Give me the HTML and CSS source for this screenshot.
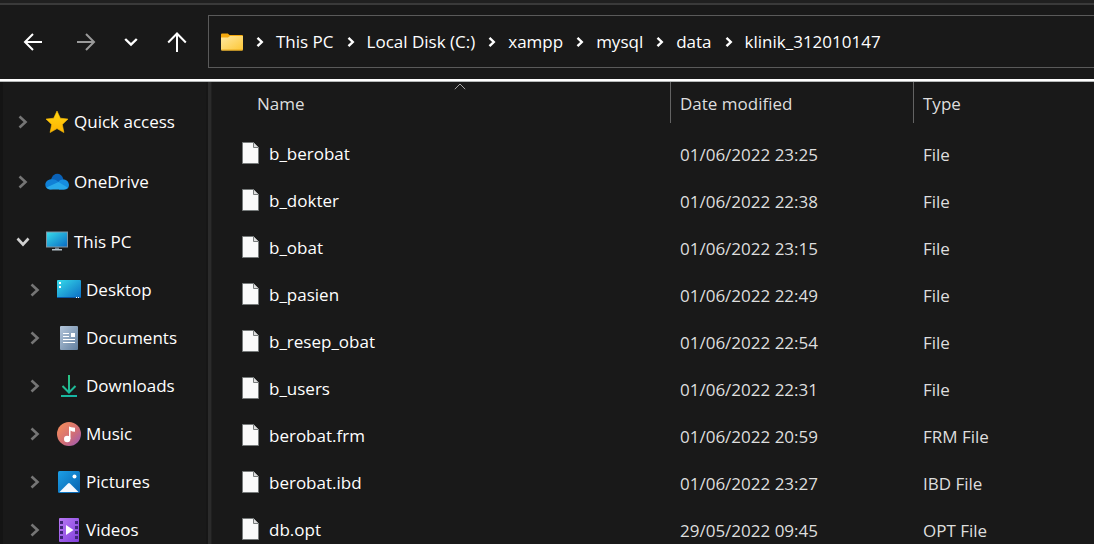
FILE: index.html
```html
<!DOCTYPE html>
<html lang="en">
<head>
<meta charset="utf-8">
<meta name="viewport" content="width=device-width, initial-scale=1">
<title>klinik_312010147</title>
<link rel="stylesheet" href="styles.css">
</head>
<body>
<svg class="defs" width="0" height="0" aria-hidden="true">
  <defs>
    <linearGradient id="gFolder" x1="0" y1="0" x2="1" y2="1"><stop offset="0" stop-color="#ffe8a0"/><stop offset="1" stop-color="#fdc634"/></linearGradient>
    <linearGradient id="gStar" x1="0" y1="0" x2="0" y2="1"><stop offset="0" stop-color="#ffd614"/><stop offset="1" stop-color="#ffb300"/></linearGradient>
    <linearGradient id="gScreen" x1="0" y1="0" x2="1" y2="1"><stop offset="0" stop-color="#36dbea"/><stop offset="1" stop-color="#0b6cc4"/></linearGradient>
    <linearGradient id="gDoc" x1="0" y1="0" x2="1" y2="1"><stop offset="0" stop-color="#b4c6db"/><stop offset="1" stop-color="#63809f"/></linearGradient>
    <linearGradient id="gDown" gradientUnits="userSpaceOnUse" x1="6" y1="1" x2="16" y2="22"><stop offset="0" stop-color="#2fc67d"/><stop offset="1" stop-color="#16b4a4"/></linearGradient>
    <linearGradient id="gMusic" x1="0" y1="0" x2="1" y2="1"><stop offset="0.1" stop-color="#f38b5c"/><stop offset="0.6" stop-color="#cf6d78"/><stop offset="1" stop-color="#9657c0"/></linearGradient>
    <linearGradient id="gPic" x1="0" y1="0" x2="1" y2="1"><stop offset="0" stop-color="#1c9fe6"/><stop offset="1" stop-color="#0560ae"/></linearGradient>
    <linearGradient id="gVideo" x1="0" y1="0" x2="1" y2="1"><stop offset="0" stop-color="#b878f4"/><stop offset="1" stop-color="#8140dc"/></linearGradient>
    <symbol id="crumb" viewBox="0 0 8 12"><path d="M1.5 1.8 5.8 6 1.5 10.2" fill="none" stroke="currentColor" stroke-width="2.4"/></symbol>
    <symbol id="chev" viewBox="0 0 10 14"><path d="M1.5 1.5 7.5 7 1.5 12.5" fill="none" stroke="currentColor" stroke-width="2.6"/></symbol>
    <symbol id="file" viewBox="0 0 17 22"><path d="M.5.5h11l5 5v16H.5z" fill="#fafafa" stroke="#777b7b"/><path d="M11.5.5v5h5" fill="#dedede" stroke="#777b7b"/></symbol>
  </defs>
</svg>

<header class="toolbar">
  <div class="nav-buttons">
    <button class="nav-button" type="button" aria-label="Back"><svg width="20" height="18" viewBox="0 0 20 18"><path d="M10 1 2 9l8 8M2 9h17" fill="none" stroke="currentColor" stroke-width="2"/></svg></button>
    <button class="nav-button muted" type="button" aria-label="Forward"><svg width="20" height="18" viewBox="0 0 20 18"><path d="M10 1l8 8-8 8M18 9H1" fill="none" stroke="currentColor" stroke-width="2"/></svg></button>
    <button class="nav-button narrow" type="button" aria-label="Recent locations"><svg width="14" height="10" viewBox="0 0 14 10"><path d="M1.2 2 7 7.5 12.8 2" fill="none" stroke="currentColor" stroke-width="2.4"/></svg></button>
    <button class="nav-button up" type="button" aria-label="Up"><svg width="20" height="20" viewBox="0 0 20 20"><path d="M1.2 10.5 10 1.5l8.800 9M10 1.500V20" fill="none" stroke="currentColor" stroke-width="2"/></svg></button>
  </div>
  <nav class="address" aria-label="Address">
    <svg class="folder" width="22" height="18" viewBox="0 0 22 18"><path d="M0 1.500Q0 .5 1 .5h5.800L8.500 2H21q1 0 1 1v13H0z" fill="#f5a90f"/><path d="M0 4.500h7L9 3h13v13q0 1.500-1 1.500H1q-1 0-1-1.500z" fill="url(#gFolder)"/><path d="M.5 17h21" stroke="#e8a91e"/></svg>
    <ol class="crumbs">
      <li><svg class="sep" aria-hidden="true"><use href="#crumb"/></svg><a href="#">This PC</a></li>
      <li><svg class="sep" aria-hidden="true"><use href="#crumb"/></svg><a href="#">Local Disk (C:)</a></li>
      <li><svg class="sep" aria-hidden="true"><use href="#crumb"/></svg><a href="#">xampp</a></li>
      <li><svg class="sep" aria-hidden="true"><use href="#crumb"/></svg><a href="#">mysql</a></li>
      <li><svg class="sep" aria-hidden="true"><use href="#crumb"/></svg><a href="#">data</a></li>
      <li><svg class="sep" aria-hidden="true"><use href="#crumb"/></svg><a href="#">klinik_312010147</a></li>
    </ol>
  </nav>
</header>

<div class="explorer">
  <nav class="sidebar" aria-label="Folders">
    <div class="tree-row root"><button class="toggle" type="button" aria-label="Expand Quick access"><svg width="10" height="14"><use href="#chev"/></svg></button>
      <a href="#"><svg class="icon" viewBox="0 0 24 24"><path d="M12 1l3.300 7.200 7.700.9-5.700 5.300 1.600 8.100L12 18.600l-6.900 3.900 1.600-8.100L1 9.100l7.700-.9z" fill="url(#gStar)" stroke="#ffc107" stroke-width=".6" stroke-linejoin="round"/></svg>Quick access</a></div>
    <div class="tree-row root"><button class="toggle" type="button" aria-label="Expand OneDrive"><svg width="10" height="14"><use href="#chev"/></svg></button>
      <a href="#"><svg class="icon" viewBox="0 0 24 24"><path d="M6 9.500C8 2.500 16 1.500 18.500 9.500L14 15z" fill="#0a62b8"/><path d="M5 19.500C-1.500 19-1.300 10 6 9.300c3-.5 5 .6 9 3.200L8 19z" fill="#1080d6"/><path d="M13.500 12c2.500-4 10-3 10.500 3 0 3-2 4.500-4.500 4.500H14z" fill="#168ddf"/><path d="M1.500 17.500 13.500 12l9 5.500q-1 2-4 2h-13q-2.500 0-4-2z" fill="#28a8ea"/></svg>OneDrive</a></div>
    <div class="tree-row open"><button class="toggle" type="button" aria-label="Collapse This PC" aria-expanded="true"><svg width="14" height="10" viewBox="0 0 14 10"><path d="M1.500 1.500 7 7.500l5.500-6" fill="none" stroke="currentColor" stroke-width="2.600"/></svg></button>
      <a href="#"><svg class="icon" viewBox="0 0 24 24"><path d="M1 1.500h22v16H1z" fill="#8295a3"/><path d="M2 2.500h20v14H2z" fill="url(#gScreen)"/><path d="M10 17.500h4v2h-4z" fill="#71818c"/><path d="M7 19h10v1.500H7z" fill="#b5c1c9"/></svg>This PC</a></div>
    <div class="tree-row child"><button class="toggle" type="button" aria-label="Expand Desktop"><svg width="10" height="14"><use href="#chev"/></svg></button>
      <a href="#"><svg class="icon" viewBox="0 0 24 24"><rect y="2" width="24" height="18" rx="1" fill="url(#gScreen)"/><path d="M0 19h24v.5q0 .5-1 .5H1q-1 0-1-.5z" fill="#0755a4"/><path d="M2 4h2v2H2zM2 8h2v2H2zM19 19h1v1h-1zM21 19h1v1h-1z" fill="#fff"/></svg>Desktop</a></div>
    <div class="tree-row child"><button class="toggle" type="button" aria-label="Expand Documents"><svg width="10" height="14"><use href="#chev"/></svg></button>
      <a href="#"><svg class="icon" viewBox="0 0 24 24"><rect x="3" width="18" height="24" rx="1" fill="url(#gDoc)"/><path d="M6 7.500h6M6 10.500h6M6 13.500h12M6 16.500h12" stroke="#fff"/><path d="M14 7h4v4h-4z" fill="#fff"/></svg>Documents</a></div>
    <div class="tree-row child"><button class="toggle" type="button" aria-label="Expand Downloads"><svg width="10" height="14"><use href="#chev"/></svg></button>
      <a href="#"><svg class="icon" viewBox="0 0 24 24"><path d="M12 1v17.500M5.500 12l6.500 6.500 6.500-6.500M4 22h16" fill="none" stroke="url(#gDown)" stroke-width="2"/></svg>Downloads</a></div>
    <div class="tree-row child"><button class="toggle" type="button" aria-label="Expand Music"><svg width="10" height="14"><use href="#chev"/></svg></button>
      <a href="#"><svg class="icon" viewBox="0 0 24 24"><circle cx="12" cy="12" r="12" fill="url(#gMusic)"/><path d="M12 4.500q1.500 1 6 1.200v4q-3 0-4.500-1.200V17H12z" fill="#fff"/><circle cx="10.200" cy="17" r="3.200" fill="#fff"/></svg>Music</a></div>
    <div class="tree-row child"><button class="toggle" type="button" aria-label="Expand Pictures"><svg width="10" height="14"><use href="#chev"/></svg></button>
      <a href="#"><svg class="icon" viewBox="0 0 24 24"><rect x="1" y="1" width="22" height="22" rx="1.500" fill="url(#gPic)"/><circle cx="17.500" cy="6.500" r="2" fill="#fff"/><path d="M2.500 22 11 13.500q1-1 2 0L21.500 22z" fill="#f2f8ff"/></svg>Pictures</a></div>
    <div class="tree-row child"><button class="toggle" type="button" aria-label="Expand Videos"><svg width="10" height="14"><use href="#chev"/></svg></button>
      <a href="#"><svg class="icon" viewBox="0 0 24 24"><rect x="2" width="20" height="24" rx="1" fill="url(#gVideo)"/><path d="M3 3h3v3H3zM3 8h3v3H3zM3 13h3v3H3zM3 18h3v3H3zM18 3h3v3h-3zM18 8h3v3h-3zM18 13h3v3h-3zM18 18h3v3h-3z" fill="#40257a"/><path d="M9 7v10l7.500-5z" fill="#fff"/></svg>Videos</a></div>
  </nav>

  <main class="files">
    <svg class="sort" width="12" height="7" viewBox="0 0 12 7" aria-hidden="true"><path d="M.8 6.200 6 1l5.200 5.200" fill="none" stroke="currentColor"/></svg>
    <table class="file-table">
      <colgroup><col class="col-name"><col class="col-date"><col></colgroup>
      <thead>
        <tr><th scope="col" aria-sort="ascending">Name</th><th scope="col">Date modified</th><th scope="col">Type</th></tr>
      </thead>
      <tbody>
        <tr><td><svg class="file-icon"><use href="#file"/></svg>b_berobat</td><td>01/06/2022 23:25</td><td>File</td></tr>
        <tr><td><svg class="file-icon"><use href="#file"/></svg>b_dokter</td><td>01/06/2022 22:38</td><td>File</td></tr>
        <tr><td><svg class="file-icon"><use href="#file"/></svg>b_obat</td><td>01/06/2022 23:15</td><td>File</td></tr>
        <tr><td><svg class="file-icon"><use href="#file"/></svg>b_pasien</td><td>01/06/2022 22:49</td><td>File</td></tr>
        <tr><td><svg class="file-icon"><use href="#file"/></svg>b_resep_obat</td><td>01/06/2022 22:54</td><td>File</td></tr>
        <tr><td><svg class="file-icon"><use href="#file"/></svg>b_users</td><td>01/06/2022 22:31</td><td>File</td></tr>
        <tr><td><svg class="file-icon"><use href="#file"/></svg>berobat.frm</td><td>01/06/2022 20:59</td><td>FRM File</td></tr>
        <tr><td><svg class="file-icon"><use href="#file"/></svg>berobat.ibd</td><td>01/06/2022 23:27</td><td>IBD File</td></tr>
        <tr><td><svg class="file-icon"><use href="#file"/></svg>db.opt</td><td>29/05/2022 09:45</td><td>OPT File</td></tr>
      </tbody>
    </table>
  </main>
</div>
</body>
</html>
```

FILE: styles.css
```css
* { box-sizing: border-box; }

body {
  margin: 0;
  height: 100vh;
  display: flex;
  flex-direction: column;
  overflow: hidden;
  background: #191919;
  color: #fff;
  font: 17px/24px "Segoe UI", "Open Sans", "Noto Sans", sans-serif;
}

a { color: inherit; text-decoration: none; }
svg { flex: none; display: block; }
.defs { position: absolute; }

button {
  padding: 0;
  border: 0;
  background: none;
  color: inherit;
  display: flex;
  align-items: center;
  justify-content: center;
}

/* Toolbar */
.toolbar {
  flex: none;
  display: flex;
  align-items: center;
  border-top: 3px solid #202020;
  border-bottom: 2px solid #fff;
  box-shadow: inset 0 2px #3a3a3a, 0 1px #b5b8b8;
  padding: 12px 0 11px;
}

.nav-buttons {
  flex: none;
  width: 208px;
  display: flex;
  align-items: center;
  padding-left: 12px;
}

.nav-button { width: 53px; height: 40px; padding-right: 12px; }
.nav-button.narrow { width: 33px; padding-right: 8px; }
.nav-button.up { width: 52px; padding: 0; }
.muted { color: #9a9a9a; }

.address {
  flex: 1;
  min-width: 0;
  height: 53px;
  display: flex;
  align-items: center;
  padding-left: 12px;
  border: 1px solid #5a5a5a;
  border-right: 0;
  overflow: hidden;
}

.crumbs {
  display: flex;
  margin: 0;
  padding: 0;
  list-style: none;
  white-space: nowrap;
}

.crumbs li { display: flex; align-items: center; }
.sep { width: 8px; height: 12px; margin: 0 12px 0 13px; }

/* Body */
.explorer { flex: 1; min-height: 0; display: flex; padding-top: 1px; }

.sidebar {
  flex: none;
  width: 212px;
  padding-top: 10px;
  overflow: hidden;
  border-left: 3px solid #141414;
  border-right: 1px solid #202020;
  box-shadow: inset -3px 0 #2b2b2b, inset -5px 0 #161616;
}

.tree-row { height: 48px; display: flex; align-items: center; padding-left: 11px; }
.tree-row.root { height: 60px; }
.tree-row.open { margin-top: 6px; }
.tree-row.child { padding-left: 23px; }
.tree-row a { display: flex; align-items: center; gap: 5px; white-space: nowrap; }
.toggle { width: 18px; height: 24px; margin-right: 13px; color: #757575; }
.open .toggle { color: #d0d0d0; }
.icon { width: 24px; height: 24px; }

.files { flex: 1; min-width: 0; position: relative; overflow: hidden; }

/* Sort mark lies over the Name heading */
.sort { position: absolute; top: 1px; left: 242px; color: #a5a5a5; }

.file-table {
  width: 100%;
  table-layout: fixed;
  border-collapse: separate;
  border-spacing: 0;
  color: #dedede;
}

.col-name { width: 458px; }
.col-date { width: 243px; }

th {
  height: 41px;
  padding: 2px 0 0 9px;
  border-left: 1px solid #636363;
  font-weight: 400;
  text-align: left;
}

th:first-child { border-left: 0; padding-left: 45px; }
thead::after { content: ""; display: table-row; height: 8px; }
td { height: 47px; padding: 0 0 0 10px; white-space: nowrap; }

td:first-child { padding-left: 30px; color: #fff; }
.file-icon { display: inline-block; width: 17px; height: 22px; margin: 0 10px 3px 0; vertical-align: middle; }
```
